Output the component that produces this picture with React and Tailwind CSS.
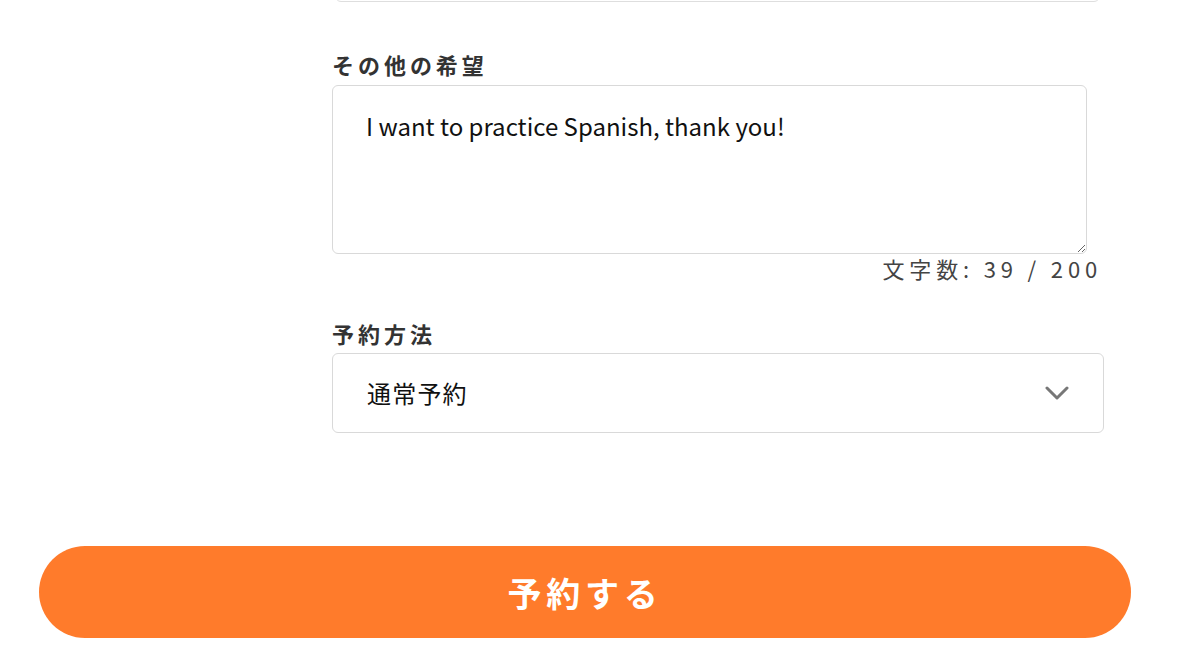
export default function App() {
  return (
    <div
      className="w-[1200px] h-[660px] overflow-hidden bg-white text-[#333]"
      style={{ fontFamily: '"Noto Sans CJK JP", "Noto Sans", sans-serif' }}
    >
      <div className="ml-[332px] w-[772px]">
        <div className="ml-[3px] w-[765px] h-[22px] mt-[-20px] rounded-md border border-[#dedede]" />

        <label className="block mt-[47px] text-[22px] leading-[30px] font-bold tracking-[0.18em]">
          その他の希望
        </label>
        <textarea
          className="mt-[6px] block w-[755px] h-[169px] rounded-md border border-[#d9d9d9] px-[33px] py-[22px] text-[24px] leading-[36px] text-[#111] outline-none"
          defaultValue="I want to practice Spanish, thank you!"
        />
        <div className="text-right mr-[2px] text-[22px] leading-[28px] tracking-[0.22em] text-[#444]">
          文字数: 39 / 200
        </div>

        <label className="block mt-[36px] text-[22px] leading-[30px] font-bold tracking-[0.18em]">
          予約方法
        </label>
        <div className="mt-[5px] flex h-[80px] items-center justify-between rounded-md border border-[#d9d9d9] pl-[34px] pr-[34px]">
          <span className="text-[24px] tracking-[0.05em] text-[#111]">通常予約</span>
          <svg width="24" height="16" viewBox="0 0 24 16" fill="none">
            <path d="M2 3l10 10L22 3" stroke="#777" strokeWidth="3" strokeLinecap="round" strokeLinejoin="round" />
          </svg>
        </div>
      </div>

      <div className="ml-[39px] mt-[113px] w-[1092px]">
        <button className="flex h-[92px] w-full items-center justify-center rounded-full bg-[#ff7b2b] text-[34px] font-bold tracking-[0.14em] text-white">
          予約する
        </button>
      </div>
    </div>
  );
}
